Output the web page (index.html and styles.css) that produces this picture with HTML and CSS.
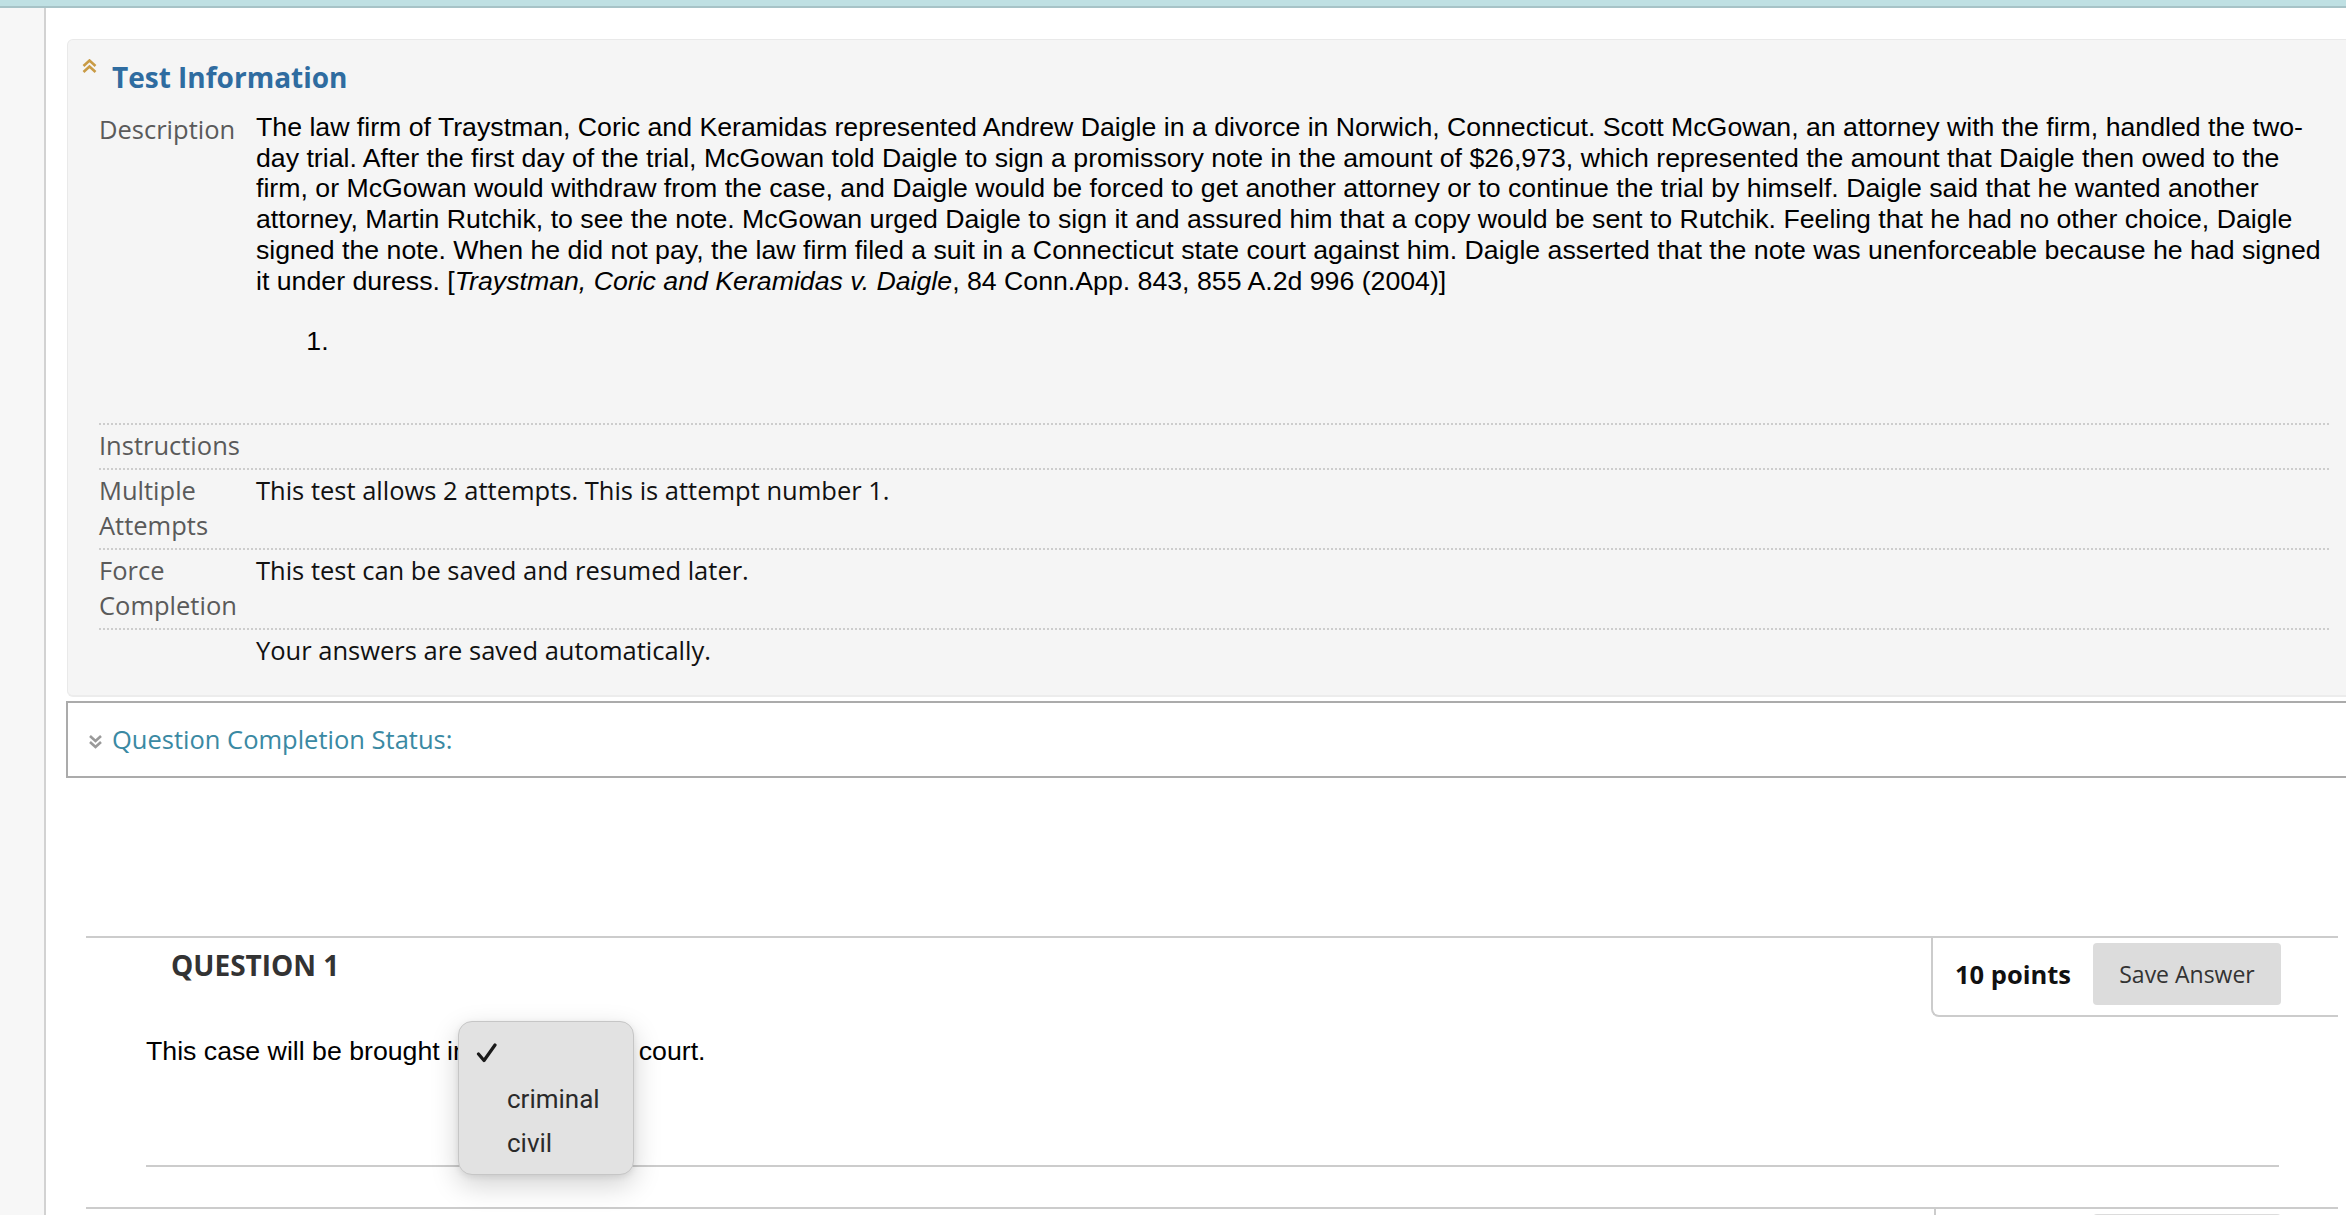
FILE: index.html
```html
<!DOCTYPE html>
<html lang="en">
<head>
<meta charset="utf-8">
<title>Test Information</title>
<link rel="stylesheet" href="styles.css">
</head>
<body>
<div class="topbar"></div>
<div class="layout">
  <aside class="gutter"></aside>
  <main class="main">
    <section class="info-panel">
      <div class="info-head">
        <svg class="chev-up" width="15" height="15" viewBox="0 0 15 15" aria-hidden="true">
          <path d="M1.5 7 L7.5 1.5 L13.5 7" fill="none" stroke="#c99b45" stroke-width="2.6"/>
          <path d="M1.5 13 L7.5 7.5 L13.5 13" fill="none" stroke="#c99b45" stroke-width="2.6"/>
        </svg>
        <h2 class="info-title">Test Information</h2>
      </div>
      <div class="info-row first">
        <div class="info-label">Description</div>
        <div class="info-value desc">
          <p class="desc-text">The law firm of Traystman, Coric and Keramidas represented Andrew Daigle in a divorce in Norwich, Connecticut. Scott McGowan, an attorney with the firm, handled the two-day trial. After the first day of the trial, McGowan told Daigle to sign a promissory note in the amount of $26,973, which represented the amount that Daigle then owed to the firm, or McGowan would withdraw from the case, and Daigle would be forced to get another attorney or to continue the trial by himself. Daigle said that he wanted another attorney, Martin Rutchik, to see the note. McGowan urged Daigle to sign it and assured him that a copy would be sent to Rutchik. Feeling that he had no other choice, Daigle signed the note. When he did not pay, the law firm filed a suit in a Connecticut state court against him. Daigle asserted that the note was unenforceable because he had signed it under duress. [<em>Traystman, Coric and Keramidas v. Daigle</em>, 84 Conn.App. 843, 855 A.2d 996 (2004)]</p>
          <ol class="desc-list"><li></li></ol>
        </div>
      </div>
      <div class="info-row">
        <div class="info-label">Instructions</div>
        <div class="info-value"></div>
      </div>
      <div class="info-row">
        <div class="info-label">Multiple<br>Attempts</div>
        <div class="info-value">This test allows 2 attempts. This is attempt number 1.</div>
      </div>
      <div class="info-row">
        <div class="info-label">Force<br>Completion</div>
        <div class="info-value">This test can be saved and resumed later.</div>
      </div>
      <div class="info-row">
        <div class="info-label"></div>
        <div class="info-value">Your answers are saved automatically.</div>
      </div>
    </section>

    <section class="status-box">
      <svg class="chev-down" width="15" height="15" viewBox="0 0 15 15" aria-hidden="true">
        <path d="M2 2 L7.5 7 L13 2" fill="none" stroke="#9a9a9a" stroke-width="2.6"/>
        <path d="M2 8 L7.5 13 L13 8" fill="none" stroke="#9a9a9a" stroke-width="2.6"/>
      </svg>
      <span class="status-title">Question Completion Status:</span>
    </section>

    <section class="question">
      <div class="q-head">
        <h3 class="q-title">QUESTION 1</h3>
        <div class="points-box">
          <span class="points">10 points</span>
          <button class="save-btn" type="button">Save Answer</button>
        </div>
      </div>
      <div class="q-body">
        <p class="q-text">This case will be brought in <span class="select-slot"></span> court.
          <span class="popup">
            <span class="popup-item checked">
              <svg class="check" width="22" height="20" viewBox="0 0 22 20" aria-hidden="true">
                <path d="M2.5 11 L8 17.5 L19 2" fill="none" stroke="#1a1a1a" stroke-width="3.2" stroke-linecap="round" stroke-linejoin="round"/>
              </svg>
            </span>
            <span class="popup-item">criminal</span>
            <span class="popup-item">civil</span>
          </span>
        </p>
        <div class="q-rule"></div>
      </div>
    </section>

    <section class="question next">
      <div class="q-head">
        <div class="q-title-empty"></div>
        <div class="points-box">
          <span class="points-slot"></span>
          <span class="save-btn-shape"></span>
        </div>
      </div>
    </section>
  </main>
</div>
</body>
</html>
```

FILE: styles.css
```css
html, body {
  margin: 0;
  padding: 0;
  height: 1215px;
  overflow: hidden;
  background: #ffffff;
}

body {
  font-family: "Open Sans", "Liberation Sans", sans-serif;
  color: #111;
}

.topbar {
  height: 6px;
  background: #bfe0e3;
  border-bottom: 2px solid #a7c3c7;
}

.layout {
  display: flex;
  height: 1207px;
}

.gutter {
  width: 44px;
  flex: 0 0 44px;
  background: #f7f7f7;
  border-right: 2px solid #d2d2d2;
}

.main {
  flex: 1;
  min-width: 0;
  overflow: hidden;
  padding-top: 31px;
}

/* Test information panel */
.info-panel {
  margin: 0 -20px 0 21px;
  padding: 18px 36px 22px 31px;
  background: #f5f5f5;
  border: 1px solid #e9e9e9;
  border-bottom: 2px solid #ececec;
  border-radius: 6px 0 0 6px;
}

.info-head {
  display: flex;
  align-items: flex-start;
  gap: 15px;
  margin-left: -17px;
  margin-bottom: 15px;
}

.chev-up {
  flex: 0 0 15px;
  margin-top: 1px;
}

.info-title {
  margin: 0;
  font-family: "Open Sans", sans-serif;
  font-weight: 700;
  font-size: 28px;
  line-height: 38.8px;
  color: #2f6ca0;
}

.info-row {
  display: grid;
  grid-template-columns: 157px 1fr;
  padding: 3px 0 5px;
  font-size: 25.5px;
  line-height: 35px;
}

.info-row.first {
  padding: 0;
}

.info-row + .info-row {
  border-top: 2px dotted #cdcdcd;
}

.info-label {
  color: #5a5a5a;
}

.info-value {
  color: #111;
}

.desc-text {
  margin: 0;
  font-family: "Liberation Sans", Arial, sans-serif;
  font-size: 26.7px;
  line-height: 30.8px;
  color: #000;
}

.desc-list {
  margin: 29px 0 67px;
  padding-left: 80px;
  font-family: "Liberation Sans", Arial, sans-serif;
  font-size: 26.7px;
  line-height: 30.8px;
  color: #000;
}

.desc-list li {
  min-height: 30.8px;
}

/* Question completion status */
.status-box {
  display: flex;
  align-items: center;
  gap: 9px;
  margin: 4px -20px 0 20px;
  padding: 19px 20px 19px;
  border: 2px solid #ababab;
}

.chev-down {
  flex: 0 0 15px;
  margin-top: 3px;
}

.status-title {
  font-size: 25.5px;
  line-height: 35px;
  color: #3a89a3;
}

/* Question */
.question {
  margin: 158px 8px 0 40px;
}

.question.next {
  margin-top: 0;
}

.q-head {
  display: flex;
  justify-content: space-between;
  align-items: flex-start;
  border-top: 2px solid #cccccc;
}

.q-title {
  margin: 0;
  padding: 8px 0 0 85px;
  font-family: "Open Sans", sans-serif;
  font-weight: 700;
  font-size: 28px;
  line-height: 38px;
  color: #333;
}

.points-box {
  display: flex;
  align-items: center;
  gap: 22px;
  padding: 5px 57px 10px 22px;
  border-left: 2px solid #cccccc;
  border-bottom: 2px solid #cccccc;
  border-bottom-left-radius: 8px;
}

.points {
  font-weight: 700;
  font-size: 25.5px;
  color: #111;
}

.points-slot {
  display: block;
  width: 113px;
  height: 30px;
}

.save-btn,
.save-btn-shape {
  width: 188px;
  height: 62px;
  border: none;
  border-radius: 4px;
  background: #dcdcdc;
  font-family: "Open Sans", sans-serif;
  font-size: 23px;
  color: #333;
  padding: 0;
}

.save-btn-shape {
  display: block;
}

.q-body {
  padding: 0 59px 40px 60px;
}

.q-text {
  position: relative;
  margin: 19px 0 0;
  font-family: "Liberation Sans", Arial, sans-serif;
  font-size: 26.7px;
  line-height: 30.8px;
  color: #000;
}

.select-slot {
  display: inline-block;
  width: 156px;
  height: 30px;
  vertical-align: middle;
}

.popup {
  position: absolute;
  left: 312px;
  top: -15px;
  width: 174px;
  padding: 11px 0 9px;
  display: flex;
  flex-direction: column;
  background: #e2e2e2;
  border: 1px solid #c6c6c6;
  border-radius: 14px;
  box-shadow: 0 10px 28px rgba(0, 0, 0, 0.18), 0 2px 6px rgba(0, 0, 0, 0.08);
  z-index: 2;
}

.popup-item {
  display: flex;
  align-items: center;
  height: 44px;
  padding-left: 48px;
  font-family: "Roboto", "Liberation Sans", sans-serif;
  font-size: 26px;
  line-height: 44px;
  color: #2a2a2a;
}

.popup-item.checked {
  padding-left: 17px;
}

.check {
  margin-top: -4px;
}

.q-rule {
  margin-top: 97px;
  height: 2px;
  background: #cccccc;
}
```
